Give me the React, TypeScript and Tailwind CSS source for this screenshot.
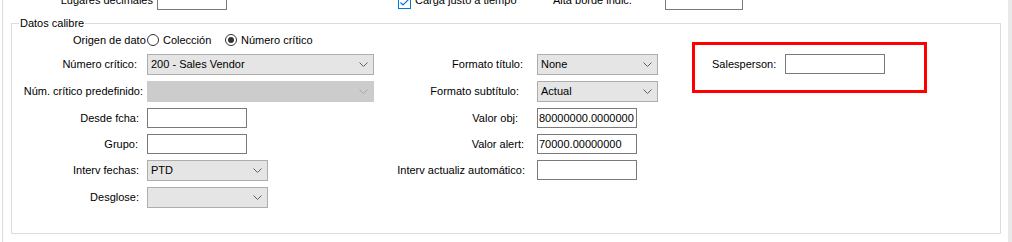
import React from "react";

function Chevron({ muted }: { muted?: boolean }) {
  return (
    <svg width="9" height="5" viewBox="0 0 9 5" className="shrink-0">
      <polyline
        points="0.5,0.5 4.5,4.5 8.5,0.5"
        fill="none"
        stroke={muted ? "#a8a8a8" : "#606060"}
        strokeWidth="1"
      />
    </svg>
  );
}

function Combo({
  value,
  className,
  disabled,
}: {
  value?: string;
  className: string;
  disabled?: boolean;
}) {
  return (
    <div
      className={`flex h-[21px] shrink-0 items-center justify-between border pl-[3px] pr-[5px] ${
        disabled ? "border-[#cccccc] bg-[#cccccc]" : "border-[#adadad] bg-[#e5e5e5]"
      } ${className}`}
    >
      <span className="whitespace-nowrap">{value}</span>
      <Chevron muted={disabled} />
    </div>
  );
}

function TextBox({ value, className }: { value?: string; className: string }) {
  return (
    <div
      className={`flex h-[20px] shrink-0 items-center overflow-hidden whitespace-nowrap border border-[#7a7a7a] bg-white pl-[1px] ${className}`}
    >
      {value}
    </div>
  );
}

function Row({
  label,
  labelClass,
  children,
}: {
  label: string;
  labelClass: string;
  children: React.ReactNode;
}) {
  return (
    <div className="mt-[6px] flex items-center">
      <div className={`shrink-0 whitespace-nowrap text-right ${labelClass}`}>{label}</div>
      {children}
    </div>
  );
}

function Radio({ checked }: { checked?: boolean }) {
  return (
    <span className="flex h-[12px] w-[12px] shrink-0 items-center justify-center rounded-full border border-[#333333] bg-white">
      {checked && <span className="h-[6px] w-[6px] rounded-full bg-[#333333]" />}
    </span>
  );
}

export default function App() {
  return (
    <div
      className="flex h-[242px] w-[1012px] overflow-hidden bg-white text-[11px] leading-[13px] text-black"
      style={{ fontFamily: '"Liberation Sans", Arial, sans-serif' }}
    >
      <div className="w-[2px] shrink-0" />
      <div className="w-px shrink-0 bg-[#dcdcdc]" />

      <div className="flex w-[1005px] shrink-0 flex-col">
        {/* cut-off row above the group */}
        <div className="h-[23px] shrink-0 overflow-hidden">
          <div className="-mt-[10px] flex h-[20px] items-center">
            <div className="w-[150px] shrink-0 text-right">Lugares decimales</div>
            <TextBox className="ml-[4px] w-[70px]" />
            <div className="ml-[171px] flex w-[155px] shrink-0 items-center">
              <span className="mt-[5px] flex h-[13px] w-[13px] shrink-0 items-center justify-center border border-[#0078d7] bg-white">
                <svg width="11" height="11" viewBox="0 0 11 11">
                  <polyline points="1.5,5.5 4,8 9.5,2.5" fill="none" stroke="#0078d7" strokeWidth="1.2" />
                </svg>
              </span>
              <span className="ml-[4px] whitespace-nowrap">Carga justo a tiempo</span>
            </div>
            <div className="w-[80px] shrink-0 whitespace-nowrap">Alta borde indic.</div>
            <TextBox className="ml-[32px] w-[78px]" />
          </div>
        </div>

        {/* Datos calibre group */}
        <div className="relative ml-[8px] flex h-[211px] w-[990px] border border-[#dcdcdc]">
          <span className="absolute left-[7px] top-[-7px] bg-white px-[1px]">Datos calibre</span>

          <div className="flex w-[368px] shrink-0 flex-col">
            <div className="mt-[8px] flex h-[16px] items-center">
              <span className="ml-[61px] w-[74px] shrink-0 whitespace-nowrap">Origen de dato</span>
              <div className="flex w-[78px] shrink-0 items-center">
                <Radio />
                <span className="ml-[4px]">Colección</span>
              </div>
              <Radio checked />
              <span className="ml-[4px] whitespace-nowrap">Número crítico</span>
            </div>
            <Row label="Número crítico:" labelClass="w-[135px] pr-[10px]">
              <Combo className="w-[227px]" value="200 - Sales Vendor" />
            </Row>
            <Row label="Núm. crítico predefinido:" labelClass="w-[135px] pr-[4px]">
              <Combo className="w-[227px]" disabled />
            </Row>
            <Row label="Desde fcha:" labelClass="w-[135px] pr-[8px]">
              <TextBox className="w-[100px]" />
            </Row>
            <Row label="Grupo:" labelClass="w-[135px] pr-[9px]">
              <TextBox className="w-[100px]" />
            </Row>
            <Row label="Interv fechas:" labelClass="w-[135px] pr-[8px]">
              <Combo className="w-[121px]" value="PTD" />
            </Row>
            <Row label="Desglose:" labelClass="w-[135px] pr-[8px]">
              <Combo className="w-[121px]" />
            </Row>
          </div>

          <div className="flex w-[280px] shrink-0 flex-col pt-[24px]">
            <Row label="Formato título:" labelClass="w-[157px] pr-[14px]">
              <Combo className="w-[121px]" value="None" />
            </Row>
            <Row label="Formato subtítulo:" labelClass="w-[157px] pr-[18px]">
              <Combo className="w-[121px]" value="Actual" />
            </Row>
            <Row label="Valor obj:" labelClass="w-[157px] pr-[19px]">
              <TextBox className="w-[100px]" value="80000000.0000000" />
            </Row>
            <Row label="Valor alert:" labelClass="w-[157px] pr-[13px]">
              <TextBox className="w-[100px]" value="70000.00000000" />
            </Row>
            <Row label="Interv actualiz automático:" labelClass="w-[157px] pr-[12px]">
              <TextBox className="w-[100px]" />
            </Row>
          </div>

          <div className="ml-[32px] mt-[18px] h-[51px] w-[235px] shrink-0 border-[3px] border-[#ff0000] pl-[17px] pt-[9px]">
            <div className="flex items-center">
              <span className="whitespace-nowrap">Salesperson:</span>
              <TextBox className="ml-[9px] w-[100px]" />
            </div>
          </div>
        </div>
      </div>

      <div className="w-[4px] shrink-0 bg-[#e9e9e9]" />
    </div>
  );
}
